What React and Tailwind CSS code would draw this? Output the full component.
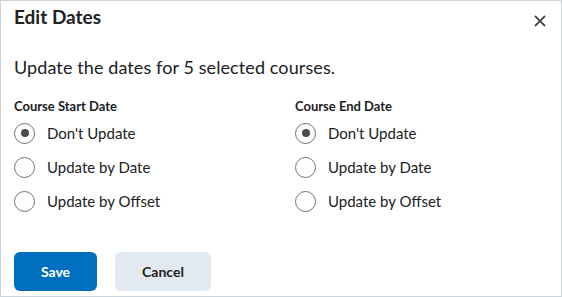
import React, { useState } from 'react';

const options = ["Don't Update", 'Update by Date', 'Update by Offset'];

const Radio = ({ checked, label, onClick }) => (
  <label className="flex items-center gap-[12px] h-[34px] cursor-pointer" onClick={onClick}>
    <span className="w-[21px] h-[21px] rounded-full border border-[#6e7376] bg-white flex items-center justify-center">
      {checked && <span className="w-[8px] h-[8px] rounded-full bg-[#494c4e]" />}
    </span>
    <span className="text-[15px] text-[#202122]">{label}</span>
  </label>
);

const DateGroup = ({ title }) => {
  const [value, setValue] = useState(0);
  return (
    <div className="flex flex-col">
      <div className="text-[13px] font-bold text-[#202122] leading-[16px] mb-[2px]">{title}</div>
      {options.map((opt, i) => (
        <Radio key={opt} label={opt} checked={value === i} onClick={() => setValue(i)} />
      ))}
    </div>
  );
};

export default function App() {
  return (
    <div
      className="w-[562px] h-[297px] bg-white border border-[#cdd5dc] flex flex-col px-[13px]"
      style={{ fontFamily: 'Lato, "Open Sans", sans-serif' }}
    >
      <div className="flex items-start justify-between h-[32px]">
        <h1 className="mt-[2px] text-[19px] leading-[28px] font-bold text-[#202122]">Edit Dates</h1>
        <button className="mt-[14px] mr-[2px] text-[#494c4e]">
          <svg width="12" height="12" viewBox="0 0 12 12" fill="none" stroke="currentColor" strokeWidth="1.8" strokeLinecap="round">
            <path d="M1.5 1.5l9 9M10.5 1.5l-9 9" />
          </svg>
        </button>
      </div>
      <p className="mt-[23px] text-[18px] text-[#202122] leading-[22px] tracking-[0.1px]">Update the dates for 5 selected courses.</p>
      <div className="mt-[20px] grid grid-cols-[281px_1fr]">
        <DateGroup title="Course Start Date" />
        <DateGroup title="Course End Date" />
      </div>
      <div className="mt-[34px] flex gap-[18px]">
        <button className="w-[83px] h-[39px] rounded-[6px] bg-[#006fbf] text-white text-[14px] font-bold">Save</button>
        <button className="w-[96px] h-[39px] rounded-[6px] bg-[#e3e9f1] text-[#202122] text-[14px] font-bold">Cancel</button>
      </div>
    </div>
  );
}
